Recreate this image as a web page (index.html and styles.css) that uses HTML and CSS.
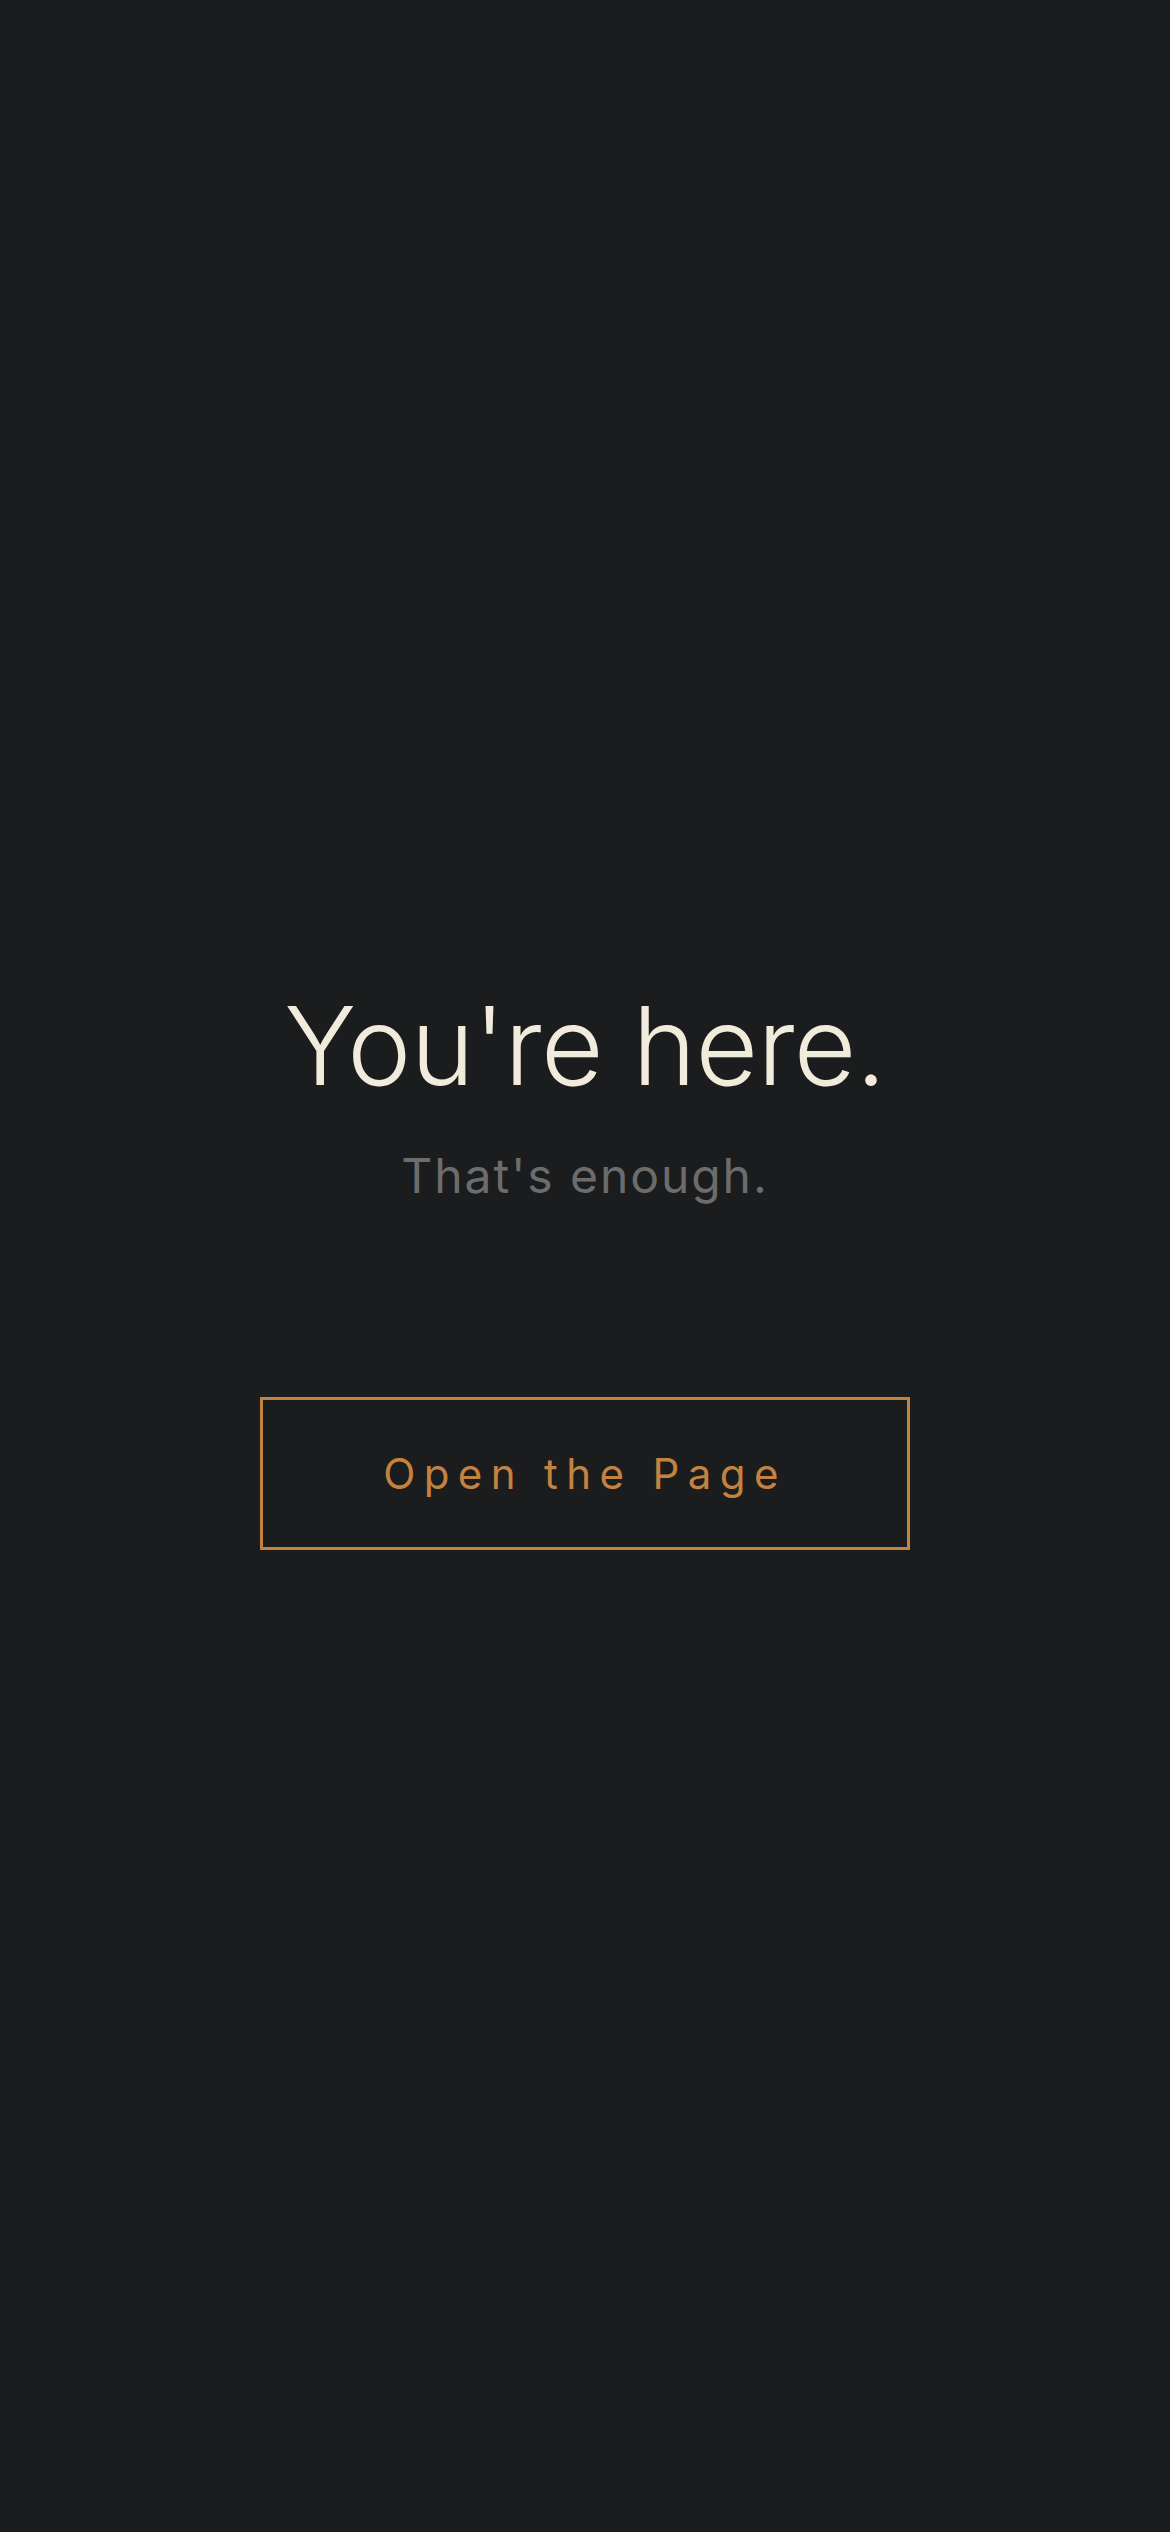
FILE: index.html
```html
<!DOCTYPE html>
<html lang="en">
<head>
<meta charset="utf-8">
<meta name="viewport" content="width=device-width, initial-scale=1">
<title>You're here.</title>
<link rel="stylesheet" href="styles.css">
</head>
<body>
<main class="screen">
  <h1 class="title">You're here.</h1>
  <p class="subtitle">That's enough.</p>
  <a class="open-btn" href="#">Open the Page</a>
</main>
</body>
</html>
```
FILE: styles.css
```css
html, body {
  margin: 0;
  padding: 0;
  background: #1b1c1e;
}

body {
  font-family: Inter, "Noto Sans", "Liberation Sans", sans-serif;
}

.screen {
  min-height: 100vh;
  box-sizing: border-box;
  padding-top: 10px;
  display: flex;
  flex-direction: column;
  align-items: center;
  justify-content: center;
}

.title {
  margin: 0;
  font-size: 108px;
  line-height: 1;
  font-weight: 300;
  color: #f0ebdb;
  letter-spacing: -0.006em;
}

.subtitle {
  margin: 52px 0 0;
  font-size: 48px;
  line-height: 1;
  font-weight: 400;
  color: #6c6c6c;
  letter-spacing: 0.04em;
}

.open-btn {
  margin-top: 197px;
  box-sizing: border-box;
  width: 650px;
  height: 153px;
  border: 3px solid #c3823f;
  display: flex;
  align-items: center;
  justify-content: center;
  font-size: 42px;
  line-height: 1;
  font-weight: 400;
  letter-spacing: 0.2em;
  color: #c3823f;
  text-decoration: none;
}
```
